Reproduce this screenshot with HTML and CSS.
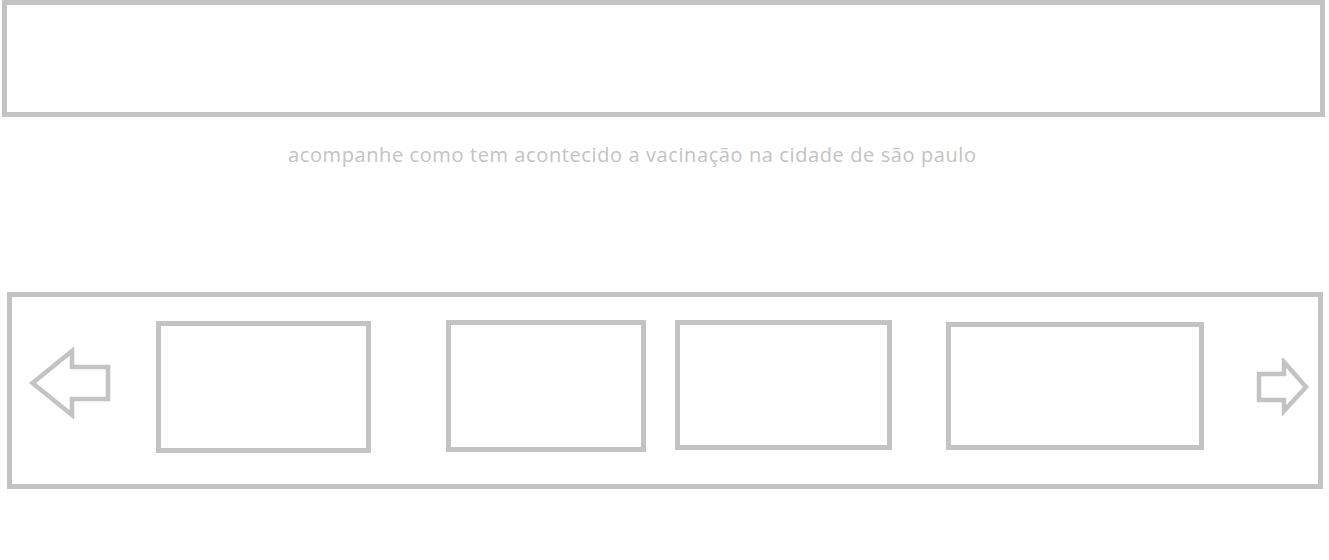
FILE: index.html
```html
<!DOCTYPE html>
<html lang="pt-BR">
<head>
<meta charset="utf-8">
<title>Vacinação</title>
<link rel="stylesheet" href="styles.css">
</head>
<body>
<div class="header"></div>
<p class="subtitle">acompanhe como tem acontecido a vacinação na cidade de são paulo</p>
<div class="carousel">
  <svg class="arrow arrow-left" width="84" height="72" viewBox="0 0 84 72">
    <polygon points="4.5,36 44,4 44,20 80,20 80,52 44,52 44,68" />
  </svg>
  <div class="card card-1"></div>
  <div class="card card-2"></div>
  <div class="card card-3"></div>
  <div class="card card-4"></div>
  <svg class="arrow arrow-right" width="56" height="58" viewBox="0 0 56 58">
    <polygon points="4,16 29,16 29,4 51,29 29,53 29,42 4,42" />
  </svg>
</div>
</body>
</html>
```

FILE: styles.css
```css
html, body {
  margin: 0;
  padding: 0;
  background: #ffffff;
}

body {
  font-family: "Open Sans", Lato, sans-serif;
}

.header {
  box-sizing: border-box;
  margin-left: 2px;
  width: 1323px;
  height: 117px;
  border: 5px solid #c3c3c3;
}

.subtitle {
  margin: 24px 0 0 0;
  padding-left: 288px;
  font-size: 20px;
  letter-spacing: 0.6px;
  line-height: 28px;
  height: 28px;
  color: #c3c3c3;
  white-space: nowrap;
}

.carousel {
  box-sizing: border-box;
  margin: 123px 0 0 7px;
  width: 1316px;
  height: 197px;
  border: 5px solid #c3c3c3;
  display: flex;
  align-items: flex-start;
}

.arrow {
  flex: none;
  display: block;
}

.arrow polygon {
  fill: none;
  stroke: #c3c3c3;
  stroke-width: 4.5;
  stroke-linejoin: miter;
}

.arrow-left {
  margin: 50px 0 0 16px;
}

.arrow-right {
  margin: 61px 0 0 51px;
}

.card {
  flex: none;
  box-sizing: border-box;
  border: 5px solid #c3c3c3;
}

.card-1 {
  margin: 24px 0 0 44px;
  width: 215px;
  height: 132px;
}

.card-2 {
  margin: 23px 0 0 75px;
  width: 200px;
  height: 132px;
}

.card-3 {
  margin: 23px 0 0 29px;
  width: 217px;
  height: 130px;
}

.card-4 {
  margin: 25px 0 0 54px;
  width: 258px;
  height: 128px;
}
```
